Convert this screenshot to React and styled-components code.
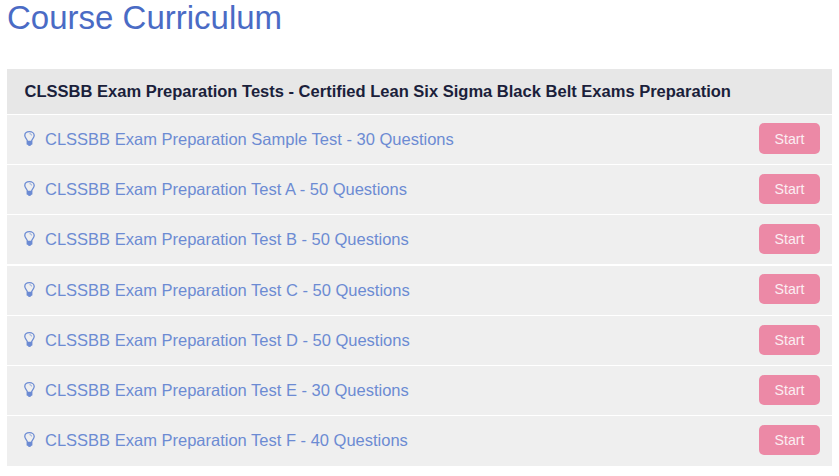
import React from "react";
import styled, { createGlobalStyle } from "styled-components";

const GlobalStyle = createGlobalStyle`
  body {
    margin: 0;
    background: #fff;
    font-family: "Liberation Sans", Arial, sans-serif;
  }
`;

const Page = styled.main`
  width: 825px;
  padding-left: 7px;
`;

const Title = styled.h1`
  margin: 0;
  height: 69px;
  font-size: 33px;
  line-height: 36px;
  font-weight: 400;
  color: #4a6bc5;
`;

const SectionTitle = styled.h2`
  margin: 0;
  height: 45px;
  padding-left: 17.5px;
  font-size: 16.52px;
  line-height: 45px;
  font-weight: 700;
  white-space: nowrap;
  color: #1b1f3b;
  background: #e7e7e7;
`;

const List = styled.ul`
  list-style: none;
  margin: 0;
  padding: 0;
`;

const Row = styled.li`
  box-sizing: border-box;
  display: flex;
  align-items: flex-start;
  height: ${(props) => (props.$tall ? 51 : 50)}px;
  padding: 0 12px 0 17px;
  border-top: ${(props) => (props.$thick ? 2 : 1)}px solid #fff;
  background: #efefef;
`;

const Bulb = styled.svg`
  width: 11px;
  height: 15px;
  flex: none;
  margin: 16px 10px 0 0;
`;

const TestLink = styled.a`
  flex: 1;
  margin-top: 12px;
  font-size: 16.5px;
  line-height: 24px;
  white-space: nowrap;
  color: #6c8bd3;
`;

const StartButton = styled.button`
  width: 61px;
  height: ${(props) => (props.$first ? 31 : 30)}px;
  margin-top: ${(props) => props.$top}px;
  padding: 0;
  border: 0;
  border-radius: 5px;
  font: 14.2px "Liberation Sans", Arial, sans-serif;
  color: #fbeef2;
  background: #ec89a6;
`;

const tests = [
  "CLSSBB Exam Preparation Sample Test - 30 Questions",
  "CLSSBB Exam Preparation Test A - 50 Questions",
  "CLSSBB Exam Preparation Test B - 50 Questions",
  "CLSSBB Exam Preparation Test C - 50 Questions",
  "CLSSBB Exam Preparation Test D - 50 Questions",
  "CLSSBB Exam Preparation Test E - 30 Questions",
  "CLSSBB Exam Preparation Test F - 40 Questions",
];

const BulbIcon = () => (
  <Bulb viewBox="0 0 11 15" aria-hidden="true">
    <path
      d="M3.5 10.3C3.3 8 .8 7 .8 4.6.8 2.2 2.9.7 5.5.7s4.7 1.5 4.7 3.9c0 2.4-2.5 3.4-2.7 5.7"
      fill="none"
      stroke="#6c8bd3"
      strokeWidth="1.3"
    />
    <path d="M5.5 2.7c1.2 0 2 .6 2 1.7" fill="none" stroke="#6c8bd3" strokeWidth=".8" />
    <path d="M2.6 9.8h5.8v3.1q0 .8-1.1.9Q6.7 15 5.5 15t-1.8-1.2q-1.1-.1-1.1-.9z" fill="#6c8bd3" />
  </Bulb>
);

const App = () => {
  return (
    <Page>
      <GlobalStyle />
      <Title>Course Curriculum</Title>
      <SectionTitle>
        CLSSBB Exam Preparation Tests - Certified Lean Six Sigma Black Belt Exams Preparation
      </SectionTitle>
      <List>
        {tests.map((test, i) => (
          <Row key={test} $thick={i === 3} $tall={i === 3 || i === tests.length - 1}>
            <BulbIcon />
            <TestLink>{test}</TestLink>
            <StartButton type="button" $first={i === 0} $top={i === 0 || i === 3 ? 8 : 9}>
              Start
            </StartButton>
          </Row>
        ))}
      </List>
    </Page>
  );
};

export default App;
